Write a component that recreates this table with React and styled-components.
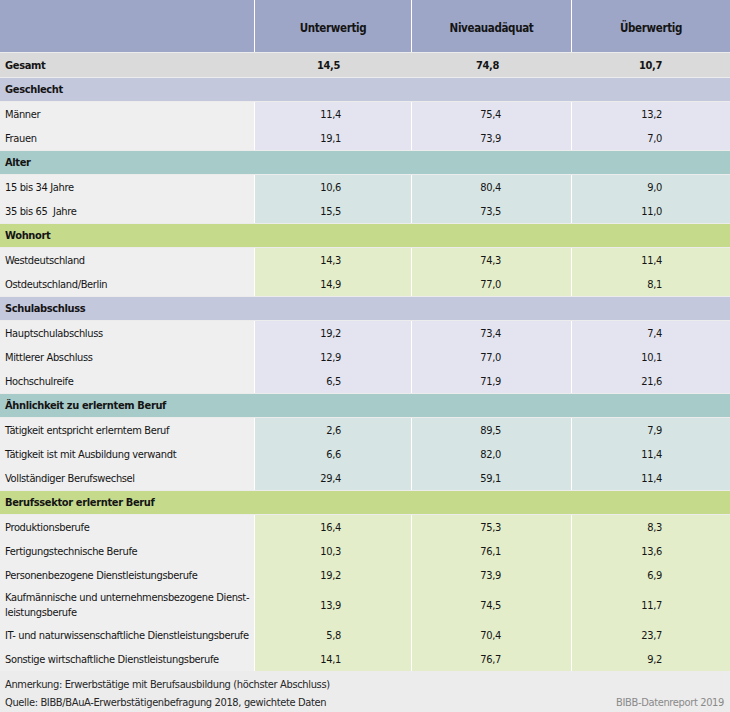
import React from 'react'
import styled, { createGlobalStyle } from 'styled-components'

const GlobalStyle = createGlobalStyle`
  body {
    margin: 0;
    background: #ececec;
    font-family: "DejaVu Sans Condensed", "Liberation Sans", sans-serif;
  }
`

const sections = [
  {
    title: 'Geschlecht', tone: 'blue',
    rows: [['Männer', '11,4', '75,4', '13,2'], ['Frauen', '19,1', '73,9', '7,0']],
  },
  {
    title: 'Alter', tone: 'teal',
    rows: [['15 bis 34 Jahre', '10,6', '80,4', '9,0'], ['35 bis 65  Jahre', '15,5', '73,5', '11,0']],
  },
  {
    title: 'Wohnort', tone: 'green',
    rows: [['Westdeutschland', '14,3', '74,3', '11,4'], ['Ostdeutschland/Berlin', '14,9', '77,0', '8,1']],
  },
  {
    title: 'Schulabschluss', tone: 'blue',
    rows: [
      ['Hauptschulabschluss', '19,2', '73,4', '7,4'],
      ['Mittlerer Abschluss', '12,9', '77,0', '10,1'],
      ['Hochschulreife', '6,5', '71,9', '21,6'],
    ],
  },
  {
    title: 'Ähnlichkeit zu erlerntem Beruf', tone: 'teal',
    rows: [
      ['Tätigkeit entspricht erlerntem Beruf', '2,6', '89,5', '7,9'],
      ['Tätigkeit ist mit Ausbildung verwandt', '6,6', '82,0', '11,4'],
      ['Vollständiger Berufswechsel', '29,4', '59,1', '11,4'],
    ],
  },
  {
    title: 'Berufssektor erlernter Beruf', tone: 'green',
    rows: [
      ['Produktionsberufe', '16,4', '75,3', '8,3'],
      ['Fertigungstechnische Berufe', '10,3', '76,1', '13,6'],
      ['Personenbezogene Dienstleistungsberufe', '19,2', '73,9', '6,9'],
      ['Kaufmännische und unternehmensbezogene Dienst-\nleistungsberufe', '13,9', '74,5', '11,7'],
      ['IT- und naturwissenschaftliche Dienstleistungsberufe', '5,8', '70,4', '23,7'],
      ['Sonstige wirtschaftliche Dienstleistungsberufe', '14,1', '76,7', '9,2'],
    ],
  },
]

const tones = {
  blue: { head: '#c4c8dd', cell: '#e3e4f0' },
  teal: { head: '#a7cbc9', cell: '#d6e5e3' },
  green: { head: '#c6da8c', cell: '#e3edc9' },
}

const Page = styled.div`
  width: 730px;
  height: 712px;
  background: #ececec;
  color: #141414;
  font-size: 11px;
  letter-spacing: -0.35px;
  display: flex;
  flex-direction: column;
  gap: 1px;
  overflow: hidden;
  & > * { flex-shrink: 0; }
`

const Grid = styled.div`
  display: grid;
  grid-template-columns: 254px 156px 159px 1fr;
  column-gap: ${p => (p.$split ? '1px' : '0')};
  background: #ffffff;
`

const HeadCell = styled.div`
  height: 52px;
  background: #9ea6c7;
  font-weight: bold;
  font-size: 11.5px;
  display: flex;
  align-items: center;
  justify-content: center;
  padding-top: 3px;
  box-sizing: border-box;
`

const Band = styled.div`
  height: 23px;
  background: ${p => p.$bg};
  font-weight: bold;
  display: flex;
  align-items: center;
  padding-left: 5px;
`

const Body = styled.div`
  display: grid;
  grid-template-columns: 254px 156px 159px 1fr;
  column-gap: 1px;
  background: #ffffff;
`

const Label = styled.div`
  height: ${p => (p.$tall ? 36 : 24)}px;
  padding: 0 5px;
  box-sizing: border-box;
  background: ${p => p.$bg || '#efefef'};
  font-weight: ${p => (p.$bold ? 'bold' : 'normal')};
  display: flex;
  align-items: center;
  white-space: pre;
  line-height: 15px;
`

const Num = styled.div`
  background: ${p => p.$bg};
  font-weight: ${p => (p.$bold ? 'bold' : 'normal')};
  display: flex;
  align-items: center;
  justify-content: flex-end;
  padding-right: ${p => p.$pad}px;
`

const Footer = styled.div`
  flex: 1;
  display: flex;
  justify-content: space-between;
  align-items: flex-end;
  padding: 0 6px 0 5px;
  line-height: 18px;
`

const Notes = styled.div`
  color: #262626;
`

const Credit = styled.div`
  color: #8a8a8a;
`

const pads = [70, 70, 68]

export default function App () {
  return (
    <Page>
      <GlobalStyle />
      <Grid $split>
        <HeadCell />
        <HeadCell>Unterwertig</HeadCell>
        <HeadCell>Niveauadäquat</HeadCell>
        <HeadCell>Überwertig</HeadCell>
      </Grid>
      <Grid>
        <Label $bold $bg="#dadada">Gesamt</Label>
        {['14,5', '74,8', '10,7'].map((v, i) => (
          <Num key={i} $bold $bg="#dadada" $pad={pads[i]}>{v}</Num>
        ))}
      </Grid>
      {sections.map(s => (
        <React.Fragment key={s.title}>
          <Band $bg={tones[s.tone].head}>{s.title}</Band>
          <Body>
            {s.rows.map(r => (
              <React.Fragment key={r[0]}>
                <Label $tall={r[0].includes('\n')}>{r[0]}</Label>
                {r.slice(1).map((v, i) => (
                  <Num key={i} $bg={tones[s.tone].cell} $pad={pads[i]}>{v}</Num>
                ))}
              </React.Fragment>
            ))}
          </Body>
        </React.Fragment>
      ))}
      <Footer>
        <Notes>
          <div>Anmerkung: Erwerbstätige mit Berufsausbildung (höchster Abschluss)</div>
          <div>Quelle: BIBB/BAuA-Erwerbstätigenbefragung 2018, gewichtete Daten</div>
        </Notes>
        <Credit>BIBB-Datenreport 2019</Credit>
      </Footer>
    </Page>
  )
}
